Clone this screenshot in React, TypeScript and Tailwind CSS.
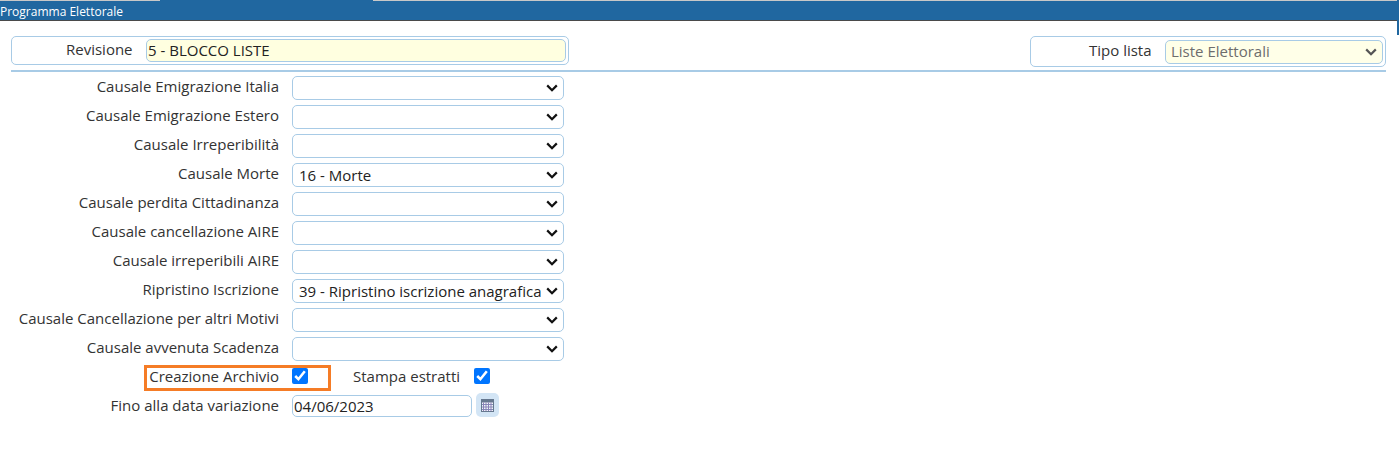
const rows: [string, string][] = [
  ["Causale Emigrazione Italia", ""],
  ["Causale Emigrazione Estero", ""],
  ["Causale Irreperibilità", ""],
  ["Causale Morte", "16 - Morte"],
  ["Causale perdita Cittadinanza", ""],
  ["Causale cancellazione AIRE", ""],
  ["Causale irreperibili AIRE", ""],
  ["Ripristino Iscrizione", "39 - Ripristino iscrizione anagrafica"],
  ["Causale Cancellazione per altri Motivi", ""],
  ["Causale avvenuta Scadenza", ""],
];

function Chevron({ color }: { color: string }) {
  return (
    <svg
      width="12"
      height="8"
      viewBox="0 0 12 8"
      className="pointer-events-none absolute right-[6px] top-1/2 -translate-y-1/2"
    >
      <path d="M1.2 1.4 6 6.2l4.8-4.8" fill="none" stroke={color} strokeWidth="2.2" />
    </svg>
  );
}

function CalendarIcon() {
  return (
    <svg width="13" height="13" viewBox="0 0 13 13">
      <rect x="0" y="0" width="13" height="13" fill="#f2f5fa" />
      <rect x="0" y="0" width="13" height="3.5" fill="#66788f" />
      <path d="M0 5.5h13M0 8h13M0 10.5h13" stroke="#7f8fb5" strokeWidth="1" />
      <path d="M2.5 3.5v9.5M5 3.5v9.5M7.5 3.5v9.5M10 3.5v9.5" stroke="#8d7fb8" strokeWidth="1" />
      <rect x="0.5" y="0.5" width="12" height="12" fill="none" stroke="#66788f" />
    </svg>
  );
}

export default function App() {
  return (
    <div className="relative h-[474px] w-[1399px] overflow-hidden bg-white font-['Open_Sans',sans-serif] text-[15px] leading-[20px] text-[#333333]">
      <div className="flex h-[21px] flex-col border-b border-[#4a4a4a] bg-[#2067a0]">
        <div className="flex h-px">
          <div className="w-[160px] bg-[#c8c8c8]" />
          <div className="w-[213px] bg-[#2067a0]" />
          <div className="flex-1 bg-[#c8c8c8]" />
        </div>
        <div className="pt-[3px] text-[12px] leading-[16px] text-white">Programma Elettorale</div>
      </div>

      <div className="pl-[11px] pr-[13px] pt-[15px]">
        <div className="flex items-start justify-between">
          <div className="flex h-[29px] w-[558px] items-center rounded-[5px] border border-[#a8cbe6] pl-[54px] pr-[2px]">
            <span className="w-[80px] pb-[3px]">Revisione</span>
            <input
              readOnly
              value="5 - BLOCCO LISTE"
              className="h-[23px] flex-1 rounded-[5px] border border-[#a8cbe6] bg-[#ffffe0] pb-[2px] pl-[1px] text-[15px] text-[#222222] outline-none"
            />
          </div>
          <div className="flex h-[31px] w-[356px] items-center rounded-[5px] border border-[#a8cbe6] pl-[58px] pr-[2px]">
            <span className="w-[76px] pb-[3px]">Tipo lista</span>
            <div className="relative h-[24px] flex-1">
              <select
                disabled
                value="l"
                onChange={() => {}}
                className="h-[24px] w-full appearance-none rounded-[5px] border border-[#a8cbe6] bg-[#ffffe8] pb-[2px] pl-[5px] text-[15px] text-[#6d6d6d] opacity-100"
              >
                <option value="l">Liste Elettorali</option>
              </select>
              <Chevron color="#555555" />
            </div>
          </div>
        </div>
        <div className="mt-[3px] h-[2px] bg-[#a8cbe6]" />

        <div className="-ml-[11px] mt-[4px] flex flex-col gap-[5px]">
          {rows.map(([label, value]) => (
            <div key={label} className="flex h-[24px] items-center">
              <span className="w-[279px] pb-[4px] text-right">{label}</span>
              <div className="relative ml-[13px] h-[24px] w-[272px]">
                <select
                  value={value}
                  onChange={() => {}}
                  className="h-[24px] w-full appearance-none rounded-[5px] border border-[#a8cbe6] bg-white pl-[6px] text-[15px] text-[#222222]"
                >
                  <option value={value}>{value}</option>
                </select>
                <Chevron color="#111111" />
              </div>
            </div>
          ))}
          <div className="-mt-[2px] flex h-[24px] items-center">
            <span className="w-[279px] text-right">Creazione Archivio</span>
            <input type="checkbox" checked readOnly className="ml-[13px] h-[16px] w-[16px]" />
            <span className="ml-[45px]">Stampa estratti</span>
            <input type="checkbox" checked readOnly className="ml-[14px] h-[16px] w-[16px]" />
          </div>
          <div className="flex h-[24px] items-center">
            <span className="w-[279px] text-right">Fino alla data variazione</span>
            <input
              readOnly
              value="04/06/2023"
              className="ml-[13px] mt-[2px] h-[22px] w-[180px] rounded-[5px] border border-[#a8cbe6] pl-[1px] text-[15px] text-[#222222] outline-none"
            />
            <button className="ml-[4px] flex h-[24px] w-[23px] items-center justify-center rounded-[5px] bg-[#d3e5f5]">
              <CalendarIcon />
            </button>
          </div>
        </div>
      </div>

      <div className="absolute left-[144px] top-[365px] h-[26px] w-[187px] border-[3px] border-[#f57c26]" />
      <div className="absolute right-0 top-0 h-[35px] w-[2px] bg-[#2067a0]" />
    </div>
  );
}
